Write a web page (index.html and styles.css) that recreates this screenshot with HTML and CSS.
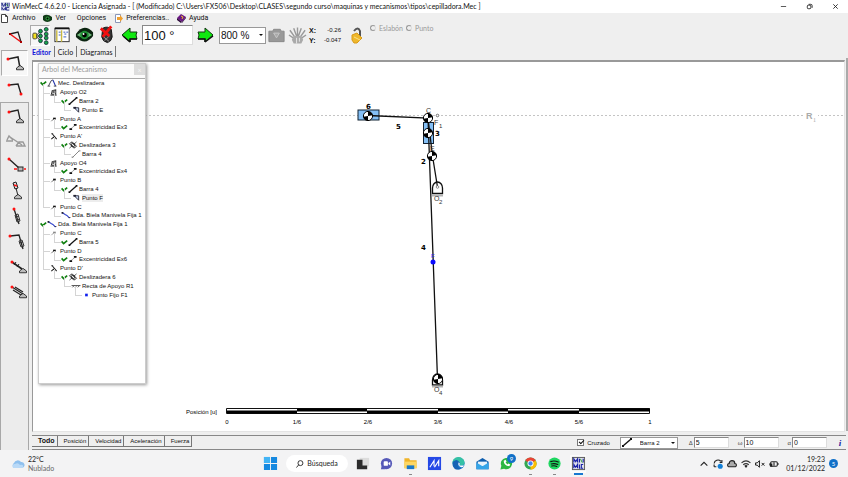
FILE: index.html
```html
<!DOCTYPE html>
<html lang="es">
<head>
<meta charset="utf-8">
<title>WinMecC 4.6.2.0</title>
<link rel="stylesheet" href="styles.css">
</head>
<body>
<svg class="defs" aria-hidden="true">
  <symbol id="check" viewBox="0 0 7 6"><path d="M.6 2.4L2.6 4.6L6.2 1.6" fill="none" stroke="#108010" stroke-width="1.7"/></symbol>
  <symbol id="mec" viewBox="0 0 10 9"><path d="M1 8L4 2L6 1" fill="none" stroke="#334" stroke-width="1"/><path d="M6 1L9 8" stroke="#2233aa" stroke-width="1.3"/><path d="M0 8h3M7 8h3" stroke="#444"/></symbol>
  <symbol id="apoyo" viewBox="0 0 10 9"><path d="M2 7L3 3L7 2L7 7ZM3 6L7 2M3 3L7 7M1 8h7" fill="none" stroke="#222" stroke-width="1"/></symbol>
  <symbol id="bar" viewBox="0 0 10 9"><path d="M1.5 7.5L8.5 1.5" stroke="#111" stroke-width="1.4"/><path d="M0 7h2v2H0zM8 0h2v2H8z" fill="#111"/></symbol>
  <symbol id="thinbar" viewBox="0 0 10 9"><path d="M1 8.5L8.5 1" stroke="#777"/><path d="M0 8h2M8 1h2" stroke="#777"/></symbol>
  <symbol id="flag" viewBox="0 0 10 9"><path d="M3 2L8 2L8 7Z" fill="#c8d8f4" stroke="#223" stroke-width="1"/><path d="M2 1h3v2H2z" fill="#223"/></symbol>
  <symbol id="point" viewBox="0 0 10 9"><path d="M2 7L5 4" stroke="#666"/><path d="M4 3h3v2H4z" fill="#111"/></symbol>
  <symbol id="pointgrey" viewBox="0 0 10 9"><path d="M2 7L5 4" stroke="#999"/><path d="M4 3h3v2H4z" fill="#888"/></symbol>
  <symbol id="cross" viewBox="0 0 10 9"><path d="M3 2L8 8M5.500 5L2 8M2 2h2" fill="none" stroke="#222" stroke-width="1.2"/></symbol>
  <symbol id="exc" viewBox="0 0 10 9"><path d="M2 7L8 2" stroke="#666" stroke-dasharray="2 1"/><path d="M1 6h3v2H1zM6 1h3v2H6z" fill="#111"/></symbol>
  <symbol id="slider" viewBox="0 0 10 9"><path d="M1 3L4 1L9 6L6 8Z" fill="#fff" stroke="#222"/><circle cx="5" cy="4.5" r="2" fill="none" stroke="#222"/><path d="M1 8L9 1" stroke="#222" stroke-width=".8"/></symbol>
  <symbol id="dda" viewBox="0 0 10 9"><path d="M1 2L4 4L6 5L9 8" fill="none" stroke="#3344cc" stroke-width="1.3"/><path d="M0 1h2v2H0zM8 7h2v1H8z" fill="#223"/></symbol>
  <symbol id="recta" viewBox="0 0 10 9"><path d="M0 4h10M1 6l2-2M4 6l2-2M7 6l2-2" stroke="#444"/></symbol>
  <symbol id="dot" viewBox="0 0 10 9"><path d="M4 3h3v3H4z" fill="#1020ee"/></symbol>
  <symbol id="com" viewBox="-6 -6 12 12"><circle r="4.6" fill="#fff" stroke="#000"/><path d="M0 0L-3 -3.5A4.6 4.6 0 0 1 3 -3.5ZM0 0L-3 3.5A4.6 4.6 0 0 0 3 3.5Z" transform="rotate(40)"/></symbol>
  <symbol id="base" viewBox="0 0 16 6"><path d="M4 3L8 0l4 3v2H4z" fill="#bbb" stroke="#222"/></symbol>
  <symbol id="app" viewBox="0 0 10 10"><path d="M0 0h10v10H0z" fill="#dfe2ee"/><path d="M1 5V1l2 4 2-4v4M7 1v4M9 1v4M1 9V6l2 3 2-3v3M9 6H6v3h3" fill="none" stroke="#1c2484"/><path d="M6 2l2 3" stroke="#2a8a3a"/></symbol>
</svg>

<header class="titlebar">
  <svg class="app-icon"><use href="#app"/></svg>
  <h1>WinMecC 4.6.2.0 - Licencia Asignada - [ (Modificado) C:\Users\FX506\Desktop\CLASES\segundo curso\maquinas y mecanismos\tipos\cepilladora.Mec ]</h1>
  <div class="window-controls">
    <button aria-label="Minimizar"><svg viewBox="0 0 8 8"><path d="M1 4h6" stroke="#444"/></svg></button>
    <button aria-label="Restaurar"><svg viewBox="0 0 8 8"><rect x="1.5" y="2.5" width="4" height="4" rx="1" fill="none" stroke="#222"/><path d="M3 1.5h2.500q1.500 0 1.500 1.500v2.500" fill="none" stroke="#222"/></svg></button>
    <button aria-label="Cerrar"><svg viewBox="0 0 8 8"><path d="M1.500 1.500l5 5M6.500 1.500l-5 5" stroke="#222"/></svg></button>
  </div>
</header>

<nav class="menu">
  <button><svg viewBox="0 0 9 9"><path d="M1.500 .5h4l2 2v6h-6z" fill="#fff" stroke="#444"/><path d="M5.500 .5v2h2" fill="none" stroke="#444"/></svg>Archivo</button>
  <button><svg viewBox="0 0 9 9"><path d="M0 2q4-3 9 1v3q-5 4-9 0z" fill="#123b18"/><circle cx="4.500" cy="4.500" r="2" fill="#2c9a3a"/><circle cx="4.500" cy="4.500" r="1"/></svg>Ver</button>
  <button class="plain">Opciones</button>
  <button><svg viewBox="0 0 9 9"><path d="M1.500 .5h5v8h-5z" fill="#fff" stroke="#8a97b8"/><path d="M3 3h3V1l3 3.500L6 8V6H3z" fill="#f0a030"/></svg>Preferencias..</button>
  <button><svg viewBox="0 0 9 9"><path d="M0 4l4-4 5 3-4 5z" fill="#6a1784"/><path d="M0 4l5 4-1 1-4-3zM5 8l4-5v1L5 9z" fill="#2c0838"/><path d="M4 2l2 1-1 2" fill="none" stroke="#f0c030"/></svg>Ayuda</button>
</nav>

<div class="work">
  <aside class="tools" aria-label="Elementos">
    <div class="group first">
      <button aria-label="Eslabón triangular"><svg viewBox="0 0 24 24"><path d="M7 9L15 7L18 17" fill="none" stroke="#222" stroke-width="1.300"/><path d="M7 9L18 17" stroke="#e11" stroke-width="1.500"/><path d="M6 8h2v2H6zM17 16h2v2h-2z" fill="#a00"/></svg></button>
      <button class="pressed" aria-label="Barra con apoyo"><svg viewBox="0 0 24 24"><path d="M5 8L15 6L17 17" fill="none" stroke="#222" stroke-width="1.500"/><circle cx="5" cy="8" r="1.500" fill="#f11"/><use href="#base" x="10" y="14" width="14" height="6"/></svg></button>
      <button aria-label="Dos barras"><svg viewBox="0 0 24 24"><path d="M6 8L15 7L18 17" fill="none" stroke="#222" stroke-width="1.400"/><circle cx="6" cy="8" r="1.500" fill="#f11"/><circle cx="18" cy="17" r="1.500" fill="#f11"/></svg></button>
    </div>
    <div class="group second">
      <button aria-label="Manivela"><svg viewBox="0 0 24 24"><path d="M5 8L14 6L16 15" fill="none" stroke="#222" stroke-width="1.300"/><circle cx="5" cy="8" r="1.500" fill="#f11"/><use href="#base" x="9" y="14" width="14" height="6"/></svg></button>
      <button aria-label="Biela" disabled><svg viewBox="0 0 24 24"><path d="M3 11l2-4 4 4M6 8L18 16M2 12h7M12 17h9l-2-4h-4l-3 4" fill="none" stroke="#999" stroke-width="1.400"/></svg></button>
      <button aria-label="Corredera horizontal"><svg viewBox="0 0 24 24"><path d="M5 5L15 14" stroke="#222" stroke-width="1.400"/><circle cx="5" cy="5" r="1.500" fill="#f11"/><rect x="14" y="13" width="5" height="4" fill="#bbb" stroke="#222"/><path d="M10 15h3M20 15h2" stroke="#f11" stroke-width="1.500"/></svg></button>
      <button aria-label="Corredera con apoyo"><svg viewBox="0 0 24 24"><path d="M9 4l3-1 2 6-3 1zM12 9l2 8" fill="#ddd" stroke="#222"/><path d="M10 6l3 1" stroke="#f11" stroke-width="1.500"/><use href="#base" x="7" y="15" width="14" height="6"/></svg></button>
      <button aria-label="Biela corredera"><svg viewBox="0 0 24 24"><path d="M10 5L15 20" stroke="#222" stroke-width="1.300"/><circle cx="10" cy="5" r="1.500" fill="#f11"/><path d="M11 11l3-1 2 7-3 1zM11 13l4-1M12 16l4-1" fill="none" stroke="#333"/></svg></button>
      <button aria-label="Manivela corredera"><svg viewBox="0 0 24 24"><path d="M6 7L15 6L19 20" fill="none" stroke="#222" stroke-width="1.300"/><circle cx="6" cy="7" r="1.500" fill="#f11"/><path d="M15 12l3-1 2 6-3 1zM15 14l4-1" fill="none" stroke="#333"/></svg></button>
      <button aria-label="Cilindro"><svg viewBox="0 0 24 24"><path d="M8 8L18 15" stroke="#222" stroke-width="1.600"/><path d="M10 11l2-3M13 13l2-3" stroke="#222"/><circle cx="8" cy="8" r="1.500" fill="#f11"/><use href="#base" x="12" y="14" width="14" height="6"/></svg></button>
      <button aria-label="Cilindro con apoyo"><svg viewBox="0 0 24 24"><path d="M8 8L19 15M9 11L17 16M11 8L19 13" stroke="#222" stroke-width="1.200"/><circle cx="8" cy="8" r="1.500" fill="#f11"/><use href="#base" x="12" y="14" width="14" height="6"/></svg></button>
    </div>
  </aside>

  <main>
    <div class="toolbar">
      <button class="tool pressed" aria-label="Árbol"><svg viewBox="0 0 20 20"><path d="M5 10L10 5M5 10h5M5 10l5 5" stroke="#333"/><rect x="2" y="7" width="4" height="6" rx="1" fill="#f4e020" stroke="#443"/><g fill="#19a54a" stroke="#123" stroke-width=".8"><circle cx="10" cy="5" r="2"/><circle cx="10" cy="10" r="2"/><circle cx="10" cy="15" r="2"/><circle cx="16" cy="3" r="2"/><circle cx="16" cy="8" r="2"/><circle cx="16" cy="12" r="2"/><circle cx="16" cy="17" r="2"/></g></svg></button>
      <button class="tool" aria-label="Datos"><svg viewBox="0 0 20 20"><rect x="2" y="3" width="15" height="14" fill="#fff" stroke="#333"/><path d="M2 3h15" stroke="#111" stroke-width="2"/><path d="M4 5v12M9 5v12" stroke="#c9b944" stroke-width="1.500"/><path d="M6 7h2M6 10h2M11 7h2M14 7h2M12 9h2M11 12h3" stroke="#3456c0"/></svg></button>
      <button class="tool" aria-label="Ver"><svg viewBox="0 0 20 20"><path d="M1 9q8-12 18-2v4q-8 11-18 1z" fill="#0b2410"/><path d="M2 10q8-7 16 0q-8 6-16 0z" fill="#6eb878"/><circle cx="10" cy="10" r="4.500" fill="#1f8d34"/><circle cx="10" cy="10" r="2.500"/><circle cx="9" cy="9" r="1" fill="#fff"/></svg></button>
      <button class="tool" aria-label="Borrar"><svg viewBox="0 0 20 20"><path d="M6 3q5-3 9 1l1 8q-1 5-5 6q-5-1-6-6z" fill="#333" stroke="#111"/><path d="M7 12l6 5M13 11l-5 5" stroke="#999"/><path d="M4 3L13 11M15 1L6 12" stroke="#f01010" stroke-width="3"/></svg></button>
      <button class="tool arrow" aria-label="Girar atrás"><svg viewBox="0 0 18 16"><path d="M1 8L9 1v4h7l-1 3 1 4H9v3z" fill="#10e810" stroke="#123a12"/><path d="M9 15v-3h7M2 9l7 6" fill="none" stroke="#111" stroke-width="1.500"/></svg></button>
      <input class="angle" type="text" value="100 °" aria-label="Ángulo">
      <button class="tool arrow" aria-label="Girar adelante"><svg viewBox="0 0 18 16"><path d="M17 8L9 1v4H2l1 3-1 4h7v3z" fill="#10e810" stroke="#123a12"/><path d="M9 15v-3H2M17 9l-8 6" fill="none" stroke="#111" stroke-width="1.500"/></svg></button>
      <div class="select zoom"><select aria-label="Zoom"><option>800 %</option></select></div>
      <button class="tool" aria-label="Capturar" disabled><svg viewBox="0 0 20 20"><path d="M2 6h4l1-2h7l1 2h3v11H2z" fill="#999" stroke="#888"/><path d="M7 8h6l-3 5z" fill="#aaa" stroke="#c8c8c8"/></svg></button>
      <button class="tool" aria-label="Mover" disabled><svg viewBox="0 0 20 20"><path d="M2 5l5 7M6 3l3 8M10 2v9M14 3l-3 8M18 5l-5 7M1 10l6 4M19 10l-6 4" stroke="#999" stroke-width="1.500"/><path d="M6 11h8l2 4-2 4H6l-2-4z" fill="#aaa"/><path d="M9 13v6M12 13v4" stroke="#e8e8e8"/></svg></button>
      <dl class="coords"><dt>X:</dt><dd>-0.26</dd><dt>Y:</dt><dd>-0.047</dd></dl>
      <button class="tool lock" aria-label="Bloquear"><svg viewBox="0 0 14 18"><path d="M4 5q4-5 6 0v5" fill="none" stroke="#555" stroke-width="2"/><path d="M2 9l5-2 5 5-5 5H4l-2-3z" fill="#efb82c" stroke="#d99a1a"/><path d="M4 11l6 3" stroke="#fbe28a"/></svg></button>
      <fieldset class="pick" disabled>
        <label><input type="radio" name="pick">Eslabón</label>
        <label><input type="radio" name="pick">Punto</label>
      </fieldset>
    </div>

    <div class="tabs">
      <button class="current">Editor</button><button>Ciclo</button><button>Diagramas</button>
    </div>

    <section class="canvas" aria-label="Mecanismo">
      <svg class="drawing" viewBox="33 62 811 368" preserveAspectRatio="xMinYMin meet">
        <path d="M33 115.500H845" stroke="#c4c4c4" stroke-dasharray="2 2"/>
        <rect x="804" y="110" width="14" height="10" fill="#fff"/>
        <text class="rail" x="806" y="119">R</text><text class="rail-sub" x="813" y="122">1</text>
        <rect x="358" y="110" width="21" height="10" fill="#84bff5" stroke="#123"/>
        <rect x="423.500" y="122.500" width="10" height="21" fill="#84bff5" stroke="#123"/>
        <path d="M368 115.500L428 118L437.500 379" fill="none" stroke="#111" stroke-width="1.300"/>
        <path d="M428 118L432.500 156L437.500 187" fill="none" stroke="#111" stroke-width="1.300"/>
        <path d="M432.500 193.500v-5.500a5 6 0 0 1 10 0v5.500z" fill="none" stroke="#111" stroke-width="1.300"/>
        <circle cx="437.500" cy="187" r="1.300" fill="#fff" stroke="#666" stroke-width=".7"/>
        <circle cx="437.500" cy="115.500" r="1.300" fill="#fff" stroke="#555" stroke-width=".8"/>
        <path d="M432.500 385v-5a5 6 0 0 1 10 0v5z" fill="#fff" stroke="#111" stroke-width="1.300"/>
        <path d="M432 195.500h11M432 386.500h11" stroke="#b4b4b4" stroke-width="2"/>
        <use href="#com" x="362" y="110" width="12" height="12"/>
        <use href="#com" x="422" y="112" width="12" height="12"/>
        <use href="#com" x="422" y="127" width="12" height="12"/>
        <use href="#com" x="426" y="150" width="12" height="12"/>
        <use href="#com" x="432" y="373" width="12" height="12"/>
        <circle cx="433" cy="262" r="2.500" fill="#0c0cff"/>
        <text class="blue" x="431" y="258">F</text>
        <text class="num" x="366" y="109">6</text><text class="num" x="396" y="129">5</text>
        <text class="num" x="435" y="136">3</text><text class="num" x="421" y="164">2</text><text class="num" x="421" y="250">4</text>
        <text class="pt" x="426" y="113">C</text><text class="pt" x="434" y="125">F</text><text class="pt sub" x="439" y="128">1</text>
        <text class="pt" x="430" y="151">E</text>
        <text class="pt" x="434" y="201">O</text><text class="pt sub" x="439" y="204">2</text>
        <text class="pt" x="434" y="392">O</text><text class="pt sub" x="439" y="395">4</text>
        <g><path d="M226.500 408.500h423v5H226.500z" fill="#fff" stroke="#111" stroke-width="1"/>
          <path d="M227 412h70M297 410h70M367 412h71M438 410h70M508 412h71M579 410h71" stroke="#000" stroke-width="3"/></g>
        <text class="axis" x="186" y="414">Posición [u]</text>
        <g class="axis mid"><text x="227" y="424">0</text><text x="297" y="424">1/6</text><text x="368" y="424">2/6</text><text x="438" y="424">3/6</text><text x="509" y="424">4/6</text><text x="579" y="424">5/6</text><text x="650" y="424">1</text></g>
      </svg>

      <section class="panel">
        <header><h2>Arbol del Mecanismo</h2><button aria-label="Cerrar panel">×</button></header>
        <ul class="tree">
          <li class="l0"><svg class="ok"><use href="#check"/></svg><svg><use href="#mec"/></svg>Mec. Deslizadera</li>
          <li class="l1"><svg><use href="#apoyo"/></svg>Apoyo O2</li>
          <li class="l2 trunk"><svg class="ok"><use href="#check"/></svg><svg><use href="#bar"/></svg>Barra 2</li>
          <li class="l3 trunk"><svg><use href="#flag"/></svg>Punto E</li>
          <li class="l1"><svg><use href="#point"/></svg>Punto A</li>
          <li class="l2 trunk"><svg class="ok"><use href="#check"/></svg><svg><use href="#exc"/></svg>Excentricidad Ex3</li>
          <li class="l1"><svg><use href="#cross"/></svg>Punto A'</li>
          <li class="l2 trunk"><svg class="ok"><use href="#check"/></svg><svg><use href="#slider"/></svg>Deslizadera 3</li>
          <li class="l3 trunk"><svg><use href="#thinbar"/></svg>Barra 4</li>
          <li class="l1"><svg><use href="#apoyo"/></svg>Apoyo O4</li>
          <li class="l2 trunk"><svg class="ok"><use href="#check"/></svg><svg><use href="#exc"/></svg>Excentricidad Ex4</li>
          <li class="l1"><svg><use href="#point"/></svg>Punto B</li>
          <li class="l2 trunk"><svg class="ok"><use href="#check"/></svg><svg><use href="#bar"/></svg>Barra 4</li>
          <li class="l3 trunk"><svg><use href="#flag"/></svg><span class="chosen">Punto F</span></li>
          <li class="l1"><svg><use href="#point"/></svg>Punto C</li>
          <li class="l2"><svg><use href="#dda"/></svg>Dda. Biela Manivela Fija 1</li>
          <li class="l0"><svg class="ok"><use href="#check"/></svg><svg><use href="#dda"/></svg>Dda. Biela Manivela Fija 1</li>
          <li class="l1"><svg><use href="#pointgrey"/></svg>Punto C</li>
          <li class="l2 trunk"><svg class="ok"><use href="#check"/></svg><svg><use href="#bar"/></svg>Barra 5</li>
          <li class="l1"><svg><use href="#point"/></svg>Punto D</li>
          <li class="l2 trunk"><svg class="ok"><use href="#check"/></svg><svg><use href="#exc"/></svg>Excentricidad Ex6</li>
          <li class="l1"><svg><use href="#cross"/></svg>Punto D'</li>
          <li class="l2"><svg class="ok"><use href="#check"/></svg><svg><use href="#slider"/></svg>Deslizadera 6</li>
          <li class="l3"><svg><use href="#recta"/></svg>Recta de Apoyo R1</li>
          <li class="l4"><svg><use href="#dot"/></svg>Punto Fijo F1</li>
        </ul>
      </section>
    </section>

    <div class="status">
      <div class="views">
        <button class="current">Todo</button><button>Posición</button><button>Velocidad</button><button>Aceleración</button><button>Fuerza</button>
      </div>
      <label class="cross"><input type="checkbox" checked>Cruzado</label>
      <div class="select link"><svg><use href="#bar"/></svg><select aria-label="Eslabón"><option>Barra 2</option></select></div>
      <label class="field">Δ<input type="text" value="5"></label>
      <label class="field">ω<input type="text" value="10"></label>
      <label class="field">α<input type="text" value="0"></label>
      <button class="info" aria-label="Información">i</button>
    </div>
  </main>
</div>

<footer class="taskbar">
  <div class="weather">
    <svg viewBox="0 0 14 10"><path d="M3 9a3 3 0 0 1 0-5a4 4 0 0 1 7-1a3 3 0 0 1 1 6z" fill="#8fc0ee"/><path d="M3 9a2 2 0 0 1 1-4q3-2 5 1q4-1 3 3z" fill="#b9d9f7"/></svg>
    <p>22°C<br><span>Nublado</span></p>
  </div>
  <div class="dock">
    <button aria-label="Inicio"><svg viewBox="0 0 16 16"><path d="M1 1h6.500v6.500H1zM8.500 1H15v6.500H8.500zM1 8.500h6.500V15H1zM8.500 8.500H15V15H8.500z" fill="#1689e0"/><path d="M1 1h6.500v6.500H1z" fill="#42b4f5"/></svg></button>
    <button class="search"><svg viewBox="0 0 9 9"><circle cx="5" cy="3.500" r="2.800" fill="none" stroke="#222"/><path d="M3 5.500L.5 8.500" stroke="#222"/></svg>Búsqueda</button>
    <button aria-label="Vista de tareas"><svg viewBox="0 0 16 16"><path d="M5 2h10v9H5z" fill="#dcdcdc"/><path d="M2 4h6v6h5v4H2z" fill="#2c2c2c"/></svg></button>
    <button aria-label="Chat"><svg viewBox="0 0 16 16"><circle cx="8" cy="8" r="6" fill="#5558b8"/><path d="M2 14l1-4 4 4z" fill="#5558b8"/><rect x="5" y="5.500" width="4.500" height="5" rx="1" fill="#fff"/><path d="M10 7.500l2-1.500v4l-2-1.500z" fill="#fff"/></svg></button>
    <button class="open" aria-label="Explorador"><svg viewBox="0 0 16 16"><path d="M1.500 2.500h5l1 2h7V13h-13z" fill="#f0b429"/><path d="M1.500 6h13v7h-13z" fill="#fdd663"/><path d="M4 10h8v4H4z" fill="#1b78c8"/></svg></button>
    <button aria-label="MyASUS"><svg viewBox="0 0 16 16"><path d="M1 1h14v14H1z" fill="#2448e6"/><path d="M3 12L7.500 5v6M8 12L12.500 5v6" fill="none" stroke="#fff" stroke-width="1.200"/></svg></button>
    <button aria-label="Edge"><svg viewBox="0 0 16 16"><circle cx="8" cy="8" r="6.500" fill="#1775c8"/><path d="M1.500 8a6.500 6.500 0 0 1 13-1q0 3-3 3H9q2-3-1-4q-4 0-6.500 2z" fill="#35c1a5"/><path d="M2 6q5-4 7 1l-2 3q1 4 5 3q-8 4-10-3z" fill="#1663b5"/><path d="M8 7q2 0 1 3h5q-1 2-3 2-4-1-3-5z" fill="#fff"/></svg></button>
    <button aria-label="Correo"><svg viewBox="0 0 16 16"><path d="M1.500 6L8 2l6.500 4v8h-13z" fill="#0f5fae"/><path d="M3 6h10v5H3z" fill="#e9f4fc"/><path d="M1.500 7L8 11l6.500-4v7h-13z" fill="#35a5e8"/></svg></button>
    <button class="badged" aria-label="WhatsApp"><svg viewBox="0 0 16 16"><path d="M1.500 14.500l1-4a6 6 0 1 1 3 3z" fill="#2cb742"/><path d="M5 5q0 5 6 6l1-2-2-1-1 1q-1-1-2-2l1-1-1-2z" fill="#fff"/></svg><span>9</span></button>
    <button class="open" aria-label="Chrome"><svg viewBox="0 0 16 16"><circle cx="8" cy="8" r="6.500" fill="#34a853"/><path d="M8 8L2.400 4.700A6.500 6.500 0 0 1 13.600 4.700z" fill="#ea4335"/><path d="M8 8L13.600 4.700A6.500 6.500 0 0 1 8 14.500z" fill="#fbbc05"/><circle cx="8" cy="8" r="3.200" fill="#fff"/><circle cx="8" cy="8" r="2.300" fill="#4285f4"/></svg></button>
    <button class="open" aria-label="Spotify"><svg viewBox="0 0 16 16"><circle cx="8" cy="8" r="6.500" fill="#1ed760"/><path d="M4 6q4-1.500 8 .5M4.500 8.500q3.500-1 7 .5M5 10.700q3-.8 5.500.5" fill="none" stroke="#111" stroke-width="1.200" stroke-linecap="round"/></svg></button>
    <button class="open active" aria-label="WinMecC"><svg viewBox="0 0 16 16"><rect x="1.500" y="1.500" width="13" height="13" fill="#dfe0ea" stroke="#555"/><path d="M3 7V3l2 3 2-3v4M9 3v4M13 3v4M3 13V9l2 3 2-3v4M9 9v4h1M13 9h-2v4h2" fill="none" stroke="#1a22a8" stroke-width="1.200"/><path d="M10 3l2 4" stroke="#2c9a3a"/></svg></button>
  </div>
  <div class="tray">
    <svg viewBox="0 0 9 9"><path d="M1.500 6L4.500 3L7.500 6" fill="none" stroke="#222"/></svg>
    <svg viewBox="0 0 9 9"><path d="M1 4a3.500 3.500 0 0 1 6-2M1 7h2M8 1v2H6M1 5v2" fill="none" stroke="#222"/><circle cx="6.500" cy="6.500" r="2.300" fill="#1380d8"/></svg>
    <svg viewBox="0 0 9 9"><path d="M2 7a1.500 1.500 0 0 1 0-3a2.500 2.500 0 0 1 5 0a1.500 1.500 0 0 1 0 3z" fill="#aaa" stroke="#222"/></svg>
    <svg viewBox="0 0 9 9"><path d="M.5 3.500q4-3.500 8 0M2 5.200q2.500-2 5 0" fill="none" stroke="#333" /><path d="M3 6q1.500-1 3 0L4.500 8z" fill="#222"/></svg>
    <svg viewBox="0 0 9 9"><path d="M.5 3.500h1.500l2-2v6l-2-2H.5zM6 3.500l2.500 2.500M8.500 3.500L6 6" fill="none" stroke="#222" stroke-width=".9"/></svg>
    <svg viewBox="0 0 9 9"><rect x="1.500" y="2.500" width="6" height="4" rx="1" fill="none" stroke="#222"/><path d="M4 3h1v3H4zM8 4h1v1H8zM0 4h3v3H1z" fill="#222"/></svg>
    <p>19:23<br>01/12/2022</p>
    <span class="count">5</span>
  </div>
</footer>
</body>
</html>
```
FILE: styles.css
```css
* { box-sizing: border-box; }

html, body { height: 100%; }

body {
  margin: 0;
  display: flex;
  flex-direction: column;
  overflow: hidden;
  background: #efefef;
  color: #111;
  font: 7px/8px Lato, sans-serif;
}

button, input, select {
  margin: 0;
  padding: 0;
  border: 0;
  border-radius: 0;
  background: none;
  color: inherit;
  font: inherit;
}

h1, h2, p, dl, dd, ul, fieldset { margin: 0; padding: 0; border: 0; }
svg { display: block; flex: none; }
.defs { position: absolute; width: 0; height: 0; }

/* Title bar */
.titlebar {
  display: flex;
  align-items: center;
  height: 13px;
  padding-left: 1px;
  background: #fff;
}
.app-icon { width: 9px; height: 9px; margin-right: 2px; }
.titlebar h1 { flex: 1; font: 7px/9px Lato, sans-serif; white-space: nowrap; }
.window-controls { display: flex; }
.window-controls button { display: grid; place-items: center; width: 26px; height: 13px; }
.window-controls svg { width: 7px; height: 7px; }

/* Menu */
.menu {
  display: flex;
  gap: 8px;
  height: 11px;
  padding-bottom: 1px;
  font: 7px/9px Roboto, sans-serif;
}
.menu button { display: flex; align-items: center; gap: 3px; }
.menu .plain { margin-left: 3px; }
.menu svg { width: 9px; height: 9px; }

.work { flex: 1; display: flex; min-height: 0; }

/* Element palette */
.tools { width: 29px; display: flex; flex-direction: column; }
.tools .group { padding-left: 1px; }
.tools button { display: grid; place-items: center; width: 27px; }
.tools svg { width: 24px; height: 24px; }
.first button { height: 26px; }
.second { flex: 1; border: 1px solid #a8a8a8; border-bottom: 0; background: #ececec; }
.second button { height: 25px; }
.pressed { border: 1px solid #fff; border-top-color: #aaa; border-left-color: #aaa; background: #f7f7f7; }

main { flex: 1; min-width: 0; display: flex; flex-direction: column; }

/* Toolbar */
.toolbar { display: flex; align-items: center; gap: 2px; height: 22px; padding-left: 1px; }
.tool { width: 20px; height: 21px; display: grid; place-items: center; }
.tool svg { width: 19px; height: 20px; }
.tool.arrow { margin-left: 2px; }
.tool.arrow svg { width: 18px; height: 16px; }
.angle + .tool.arrow { margin-left: 0; }
.angle {
  width: 51px;
  height: 20px;
  padding-left: 1px;
  border: 1px solid #ddd;
  border-top-color: #888;
  border-left-color: #888;
  background: #fff;
  font: 13px/18px "Liberation Sans", sans-serif;
}
.select { position: relative; display: flex; align-items: center; border: 1px solid #999; background: #fff; }
.select select { appearance: none; width: 100%; height: 100%; }
.select::after {
  content: "";
  position: absolute;
  right: 2px;
  top: 50%;
  margin-top: -1px;
  border: 2px solid transparent;
  border-top-color: #111;
  pointer-events: none;
}
.zoom { width: 47px; height: 17px; margin-left: 2px; }
.zoom select { padding-left: 1px; font: 10px/15px "Liberation Sans", sans-serif; }
.zoom + .tool { margin-left: -1px; }
.zoom ~ .tool { width: 19px; }
.coords {
  display: grid;
  grid-template-columns: 10px 22px;
  row-gap: 1px;
  font: 7px/9px "Liberation Sans", sans-serif;
}
.coords dt { font-weight: 700; }
.coords dd { text-align: right; font-size: 6px; }
.toolbar .lock { width: 14px; margin-left: 7px; }
.lock svg { width: 14px; height: 18px; }
.pick { display: flex; gap: 3px; align-self: flex-start; padding-left: 4px; color: #999; }
.pick label { display: flex; align-items: center; gap: 3px; }
.pick input { appearance: none; width: 6px; height: 6px; border: 1px solid #999; border-right-color: #ddd; border-radius: 50%; }

/* Tabs above the canvas */
.tabs { display: flex; align-items: flex-start; height: 14px; }
.tabs button { height: 11px; padding: 0 3px; border-right: 1px solid #777; }
.tabs .current { color: #1212d8; font-weight: 700; }

/* Canvas */
.canvas {
  position: relative;
  flex: 1;
  min-height: 0;
  margin-left: 3px;
  margin-right: 3px;
  border: 1px solid #999;
  border-top-width: 2px;
  border-right-color: #e4e4e4;
  border-bottom-color: #e4e4e4;
  background: #fff;
}
.canvas::after { content: ""; position: absolute; top: -4px; bottom: 0; right: -4px; width: 2px; background: #aaa; }
.drawing { width: 100%; height: 100%; font: 7px "Liberation Sans", sans-serif; }
.rail { fill: #aaa; font: 700 9px "Liberation Sans", sans-serif; }
.rail-sub { fill: #aaa; font: 6px "Liberation Serif", serif; }
.num { font: 700 7px "DejaVu Sans", sans-serif; }
.pt { fill: #333; }
.sub { font-size: 6px; }
.blue { fill: #22f; font-size: 6px; }
.axis { font-size: 6px; }
.mid { text-anchor: middle; }

/* Mechanism tree, floating over the canvas */
.panel {
  position: absolute;
  left: 5px;
  top: 1px;
  width: 108px;
  height: 321px;
  border: 1px solid #ccc;
  background: #fff;
  box-shadow: 1px 1px 3px #999;
}
.panel header { display: flex; justify-content: space-between; height: 14px; background: #fbfbfb; }
.panel h2 { padding-left: 3px; color: #999; font: 7px/11px Lato, sans-serif; }
.panel header button { width: 11px; height: 11px; background: #ddd; color: #f6f6f6; }
.tree {
  display: grid;
  grid-auto-rows: 1fr;
  height: 221px;
  border-top: 1px solid #aaa;
  list-style: none;
  font: 6px/8px "Liberation Sans", sans-serif;
}
.tree li { position: relative; display: flex; align-items: center; gap: 1px; white-space: nowrap; }
.tree svg { width: 10px; height: 8px; }
.tree .ok { width: 7px; height: 6px; margin-right: -1px; }
.tree li:not(.l0)::before {
  content: "";
  position: absolute;
  top: -4px;
  width: 6px;
  height: 9px;
  border-left: 1px solid #d4d4d4;
  border-bottom: 1px solid #d4d4d4;
}
.tree .trunk::after { content: ""; position: absolute; left: 4px; top: -4px; height: 14px; border-left: 1px solid #d4d4d4; }
.tree .l0 { padding-left: 1px; }
.tree .l1 { padding-left: 10px; }
.tree .l1::before { left: 4px; }
.tree .l2 { padding-left: 22px; }
.tree .l2::before { left: 15px; }
.tree .l3 { padding-left: 32px; }
.tree .l3::before { left: 25px; }
.tree .l4 { padding-left: 42px; }
.tree .l4::before { left: 36px; }
.chosen { background: #ededed; }

/* Bar under the canvas */
.status {
  display: flex;
  align-items: center;
  height: 15px;
  margin: 3px 2px 0 3px;
  border-top: 1px solid #888;
  border-bottom: 1px solid #888;
  font: 6px/8px "Liberation Sans", sans-serif;
}
.views { display: flex; align-self: flex-start; flex: 1; }
.views button { height: 11px; padding: 0 2px 0 6px; border-right: 1px solid #777; border-bottom: 1px solid #777; }
.views .current { font-size: 7px; font-weight: 700; }
.cross { display: flex; align-items: center; gap: 3px; margin-right: 10px; }
.cross input { appearance: none; position: relative; width: 7px; height: 7px; border: 1px solid #777; background: #fff; }
.cross input:checked::after { content: ""; position: absolute; left: 1px; top: 0; width: 4px; height: 2px; border: solid #111; border-width: 0 0 1px 1px; transform: rotate(-45deg); }
.link { width: 58px; height: 12px; padding-left: 1px; margin-right: 11px; }
.link svg { width: 10px; height: 9px; }
.link select { padding-left: 8px; }
.field { display: flex; align-items: center; margin-right: 9px; color: #444; }
.field input { width: 35px; height: 11px; margin-left: 1px; padding-left: 1px; border: 1px solid #ddd; border-top-color: #888; border-left-color: #888; background: #fff; color: #111; font-size: 7px; }
.info { width: 8px; margin-right: 2px; color: #1818a0; font: italic 700 9px/10px "Liberation Serif", serif; }

/* Taskbar */
.taskbar {
  display: grid;
  grid-template-columns: 1fr auto 1fr;
  align-items: center;
  height: 27px;
  background: #f3f3f4;
  color: #222;
  font: 7px/9px Lato, sans-serif;
}
.weather { display: flex; align-items: center; gap: 3px; padding-left: 11px; }
.weather svg { width: 14px; height: 10px; }
.weather span { color: #666; }
.dock { display: flex; align-items: center; gap: 8px; }
.dock button { position: relative; display: grid; place-items: center; width: 16px; height: 18px; }
.dock svg { width: 15px; height: 15px; }
.dock .search { display: flex; justify-content: center; align-items: center; gap: 3px; width: 62px; height: 17px; border-radius: 9px; background: #fff; margin-right: -2px; }
.dock .search svg { width: 8px; height: 8px; }
.open::after { content: ""; position: absolute; bottom: -2px; width: 3px; height: 1px; background: #888; }
.dock .active { background: #fbfbfb; }
.active::after { width: 9px; height: 2px; background: #1878d0; }
.badged span { position: absolute; right: -2px; top: -1px; width: 9px; height: 9px; border-radius: 50%; background: #1070c8; color: #fff; font-size: 6px; }
.tray { display: flex; align-items: center; justify-content: flex-end; gap: 4px; padding-right: 10px; }
.tray svg { width: 10px; height: 10px; }
.tray p { margin-left: 3px; text-align: right; }
.count { width: 9px; height: 9px; border-radius: 50%; background: #1070c8; color: #fff; font-size: 6px; text-align: center; }
```
